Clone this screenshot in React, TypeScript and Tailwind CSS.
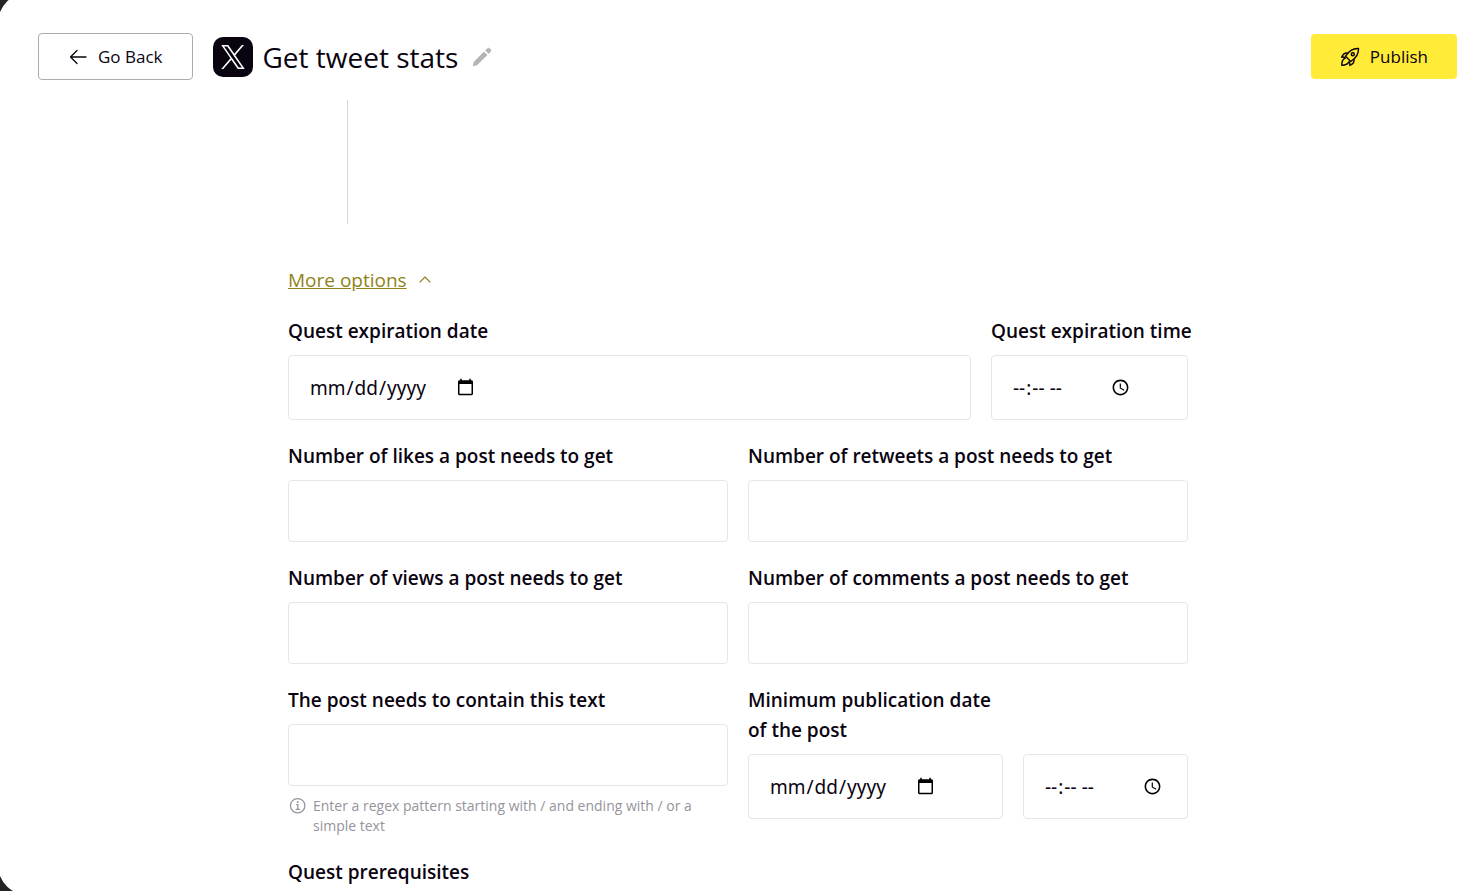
import React, { useId } from "react";
import { IoInformationCircleOutline } from "react-icons/io5";

const XLogo = () => (
  <svg viewBox="0 0 1200 1227" className="w-6 h-6" fill="currentColor">
    <path d="M714.163 519.284L1160.89 0H1055.03L667.137 450.887L357.328 0H0L468.492 681.821L0 1226.37H105.866L515.491 750.218L842.672 1226.37H1200L714.137 519.284H714.163ZM569.165 687.828L521.697 619.934L144.011 79.6944H306.615L611.412 515.685L658.88 583.579L1055.08 1150.3H892.476L569.165 687.854V687.828Z" />
  </svg>
);

const ArrowIcon = () => (
  <svg
    viewBox="0 0 20 20"
    className="w-5 h-5"
    fill="none"
    stroke="currentColor"
    strokeWidth="1.3"
    strokeLinecap="round"
    strokeLinejoin="round"
  >
    <path d="M18 10H2.5M9 3.5 2.5 10 9 16.5" />
  </svg>
);

const ChevronIcon = () => (
  <svg
    viewBox="0 0 16 16"
    className="w-4 h-4"
    fill="none"
    stroke="currentColor"
    strokeWidth="1.1"
    strokeLinecap="round"
    strokeLinejoin="round"
  >
    <path d="M3 10 8 5 13 10" />
  </svg>
);

const PencilIcon = () => (
  <svg
    viewBox="0 0 20 20"
    className="w-5 h-5"
    fill="currentColor"
    stroke="currentColor"
    strokeWidth="0.8"
    strokeLinejoin="round"
  >
    <path d="M1.2 18.8 2.3 14.8 12 5 15 8 5.2 17.7Z" />
    <path d="M13.6 3.4 15.1 1.9A2.1 2.1 0 0 1 18.1 4.9L16.6 6.4Z" />
  </svg>
);

const RocketIcon = () => (
  <svg
    viewBox="0 0 20 20"
    className="w-5 h-5"
    fill="none"
    stroke="currentColor"
    strokeWidth="1.4"
    strokeLinecap="round"
    strokeLinejoin="round"
  >
    <path d="M18.5 1.5C13.5 1.2 9.5 3 5.5 9.2L10.8 14.5C17 10.5 18.8 6.5 18.5 1.5Z" />
    <circle cx="12.8" cy="7.2" r="1.5" />
    <path d="M7.9 6.1C5 5.4 3 6.8 1.6 10.2 3.2 9.8 4.4 10 5.3 10.9" />
    <path d="M13.9 12.1C14.6 15 13.2 17 9.8 18.4 10.2 16.8 10 15.6 9.1 14.7" />
    <path d="M4.6 11.4C2.4 12.8 1.7 15 1.8 18.2 5 18.3 7.4 17.4 8.6 15.4" />
  </svg>
);

const labelClass =
  "block pt-px mb-[9px] text-[19px] leading-[30px] font-semibold";

type FieldProps = {
  label: string;
  hint?: string;
};

const TextField = ({ label, hint }: FieldProps) => {
  const id = useId();

  return (
    <div>
      <label htmlFor={id} className={labelClass}>
        {label}
      </label>
      <input
        id={id}
        type="text"
        className="block w-full h-[62px] px-5 text-[19px] border border-[#e6e5e8] rounded bg-white"
      />
      {hint && (
        <div className="flex gap-[5px] mt-2.5 text-sm leading-5 text-[#96939c]">
          <IoInformationCircleOutline className="w-5 h-5 shrink-0" />
          <p>{hint}</p>
        </div>
      )}
    </div>
  );
};

type PickerProps = {
  id: string;
  type: "date" | "time";
  ariaLabel?: string;
};

const PickerBox = ({ id, type, ariaLabel }: PickerProps) => (
  <div className="flex items-center h-[65px] px-5 border border-[#e6e5e8] rounded bg-white">
    <input
      id={id}
      type={type}
      aria-label={ariaLabel}
      className="text-[19px] leading-[30px] bg-transparent font-['Noto_Sans','Open_Sans',sans-serif]"
    />
  </div>
);

const Header = () => (
  <header className="flex items-center justify-between h-[107px] pl-10 pr-1 pt-5 shrink-0">
    <div className="flex items-center">
      <button className="flex items-center gap-2.5 h-[47px] px-[29px] border border-[#adabb1] rounded text-[17px]">
        <ArrowIcon />
        Go Back
      </button>
      <span className="flex items-center justify-center w-10 h-10 ml-5 rounded-[10px] bg-[#0a0310] text-white">
        <XLogo />
      </span>
      <h1 className="ml-2.5 text-[28px] leading-10">Get tweet stats</h1>
      <button aria-label="Edit title" className="ml-3.5 text-[#b5b3b8]">
        <PencilIcon />
      </button>
    </div>
    <button className="flex items-center gap-2.5 h-[45px] px-[29px] rounded bg-[#ffeb38] text-[17px]">
      <RocketIcon />
      Publish
    </button>
  </header>
);

const QuestForm = () => (
  <form className="w-full max-w-[900px]">
    <div className="w-px h-[124px] ml-[59px] bg-[#d8d7da]" />

    <button
      type="button"
      className="flex items-center gap-2.5 mt-[41px] mb-5 text-[19px] leading-[30px] text-[#8f8219]"
    >
      <span className="underline">More options</span>
      <ChevronIcon />
    </button>

    <div className="grid grid-cols-[1fr_197px] gap-5 mb-5">
      <div>
        <label htmlFor="expiration-date" className={labelClass}>
          Quest expiration date
        </label>
        <PickerBox id="expiration-date" type="date" />
      </div>
      <div>
        <label
          htmlFor="expiration-time"
          className={`${labelClass} whitespace-nowrap`}
        >
          Quest expiration time
        </label>
        <PickerBox id="expiration-time" type="time" />
      </div>
    </div>

    <div className="grid grid-cols-2 gap-5">
      <TextField label="Number of likes a post needs to get" />
      <TextField label="Number of retweets a post needs to get" />
      <TextField label="Number of views a post needs to get" />
      <TextField label="Number of comments a post needs to get" />
      <TextField
        label="The post needs to contain this text"
        hint="Enter a regex pattern starting with / and ending with / or a simple text"
      />
      <div className="grid grid-cols-[1fr_165px] gap-5 items-end content-start">
        <div>
          <label htmlFor="publication-date" className={labelClass}>
            Minimum publication date of the post
          </label>
          <PickerBox id="publication-date" type="date" />
        </div>
        <PickerBox
          id="publication-time"
          type="time"
          ariaLabel="Minimum publication time of the post"
        />
      </div>
    </div>

    <h2 className="mt-5 pt-px text-[19px] leading-[30px] font-semibold">
      Quest prerequisites
    </h2>
  </form>
);

const App = () => {
  return (
    <div className="h-screen overflow-hidden bg-[#242424] text-[#0a0310] font-['Open_Sans','Noto_Sans',sans-serif]">
      {/* the sheet bleeds past the window so only the curve of its corners shows */}
      <main className="flex flex-col h-[calc(100vh+11px)] -mt-[7px] -ml-[2px] rounded-l-[30px] bg-white overflow-hidden">
        <Header />
        <div className="flex flex-1 justify-center min-h-0 pl-[17px] overflow-hidden">
          <QuestForm />
        </div>
      </main>
    </div>
  );
};

export default App;
